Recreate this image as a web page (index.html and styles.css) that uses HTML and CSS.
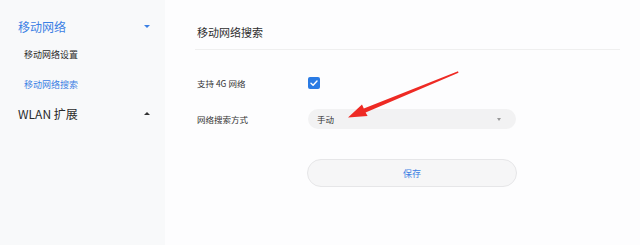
FILE: index.html
```html
<!DOCTYPE html>
<html lang="zh-CN">
<head>
    <meta charset="UTF-8">
    <meta name="viewport" content="width=device-width, initial-scale=1.0">
    <title>移动网络搜索</title>
    <link rel="stylesheet" href="styles.css">
</head>
<body>
    <div class="menu">
        <div class="grupo aberto">
            <span>移动网络</span>
            <i class="seta baixo"></i>
        </div>
        <div class="item">移动网络设置</div>
        <div class="item ativo">移动网络搜索</div>
        <div class="grupo">
            <span>WLAN 扩展</span>
            <i class="seta cima"></i>
        </div>
    </div>

    <div class="conteudo">
        <div class="titulo">移动网络搜索</div>
        <div class="linha">
            <label>支持 4G 网络</label>
            <span class="check">
                <svg width="12" height="12" viewBox="0 0 12 12"><path d="M3 6.2 L5.1 8.2 L9 4" fill="none" stroke="#fff" stroke-width="1.4" stroke-linecap="round" stroke-linejoin="round"/></svg>
            </span>
        </div>
        <div class="linha">
            <label>网络搜索方式</label>
            <div class="select">
                <span>手动</span>
                <i class="caret"></i>
            </div>
        </div>
        <button class="salvar">保存</button>

        <svg class="flecha" width="640" height="245" viewBox="0 0 640 245">
            <polygon points="348,117.5 362,104.6 363.8,108.4 458,71.2 458.5,72.7 365.6,112.4 367.6,116" fill="#ee2a24"/>
        </svg>
    </div>
</body>
</html>
```

FILE: styles.css
```css
body {
    margin: 0;
    display: flex;
    height: 245px;
    font-family: "Noto Sans CJK SC", "Noto Sans", sans-serif;
    background-color: #fdfdfe;
    color: #333;
    overflow: hidden;
}
.menu {
    width: 165px;
    background-color: #f8f9fa;
    padding-top: 13px;
    box-sizing: border-box;
}
.grupo {
    display: flex;
    align-items: center;
    justify-content: space-between;
    height: 27px;
    padding: 0 15px 0 18px;
    font-size: 12px;
    color: #2b2b2b;
}
.grupo.aberto {
    color: #3b80e4;
}
.item {
    height: 30px;
    line-height: 30px;
    padding-left: 24px;
    font-size: 9px;
    color: #2b2b2b;
}
.item.ativo {
    color: #3b80e4;
}
.seta {
    width: 0;
    height: 0;
    border-left: 3px solid transparent;
    border-right: 3px solid transparent;
}
.seta.baixo {
    border-top: 3px solid #3b80e4;
}
.seta.cima {
    border-bottom: 3px solid #333;
}
.conteudo {
    flex: 1;
    padding: 0 20px 0 30px;
    position: relative;
}
.titulo {
    padding: 24px 0 9px 2px;
    line-height: 16px;
    font-size: 11px;
    color: #2e2e2e;
    border-bottom: 1px solid #efefef;
}
.linha {
    display: flex;
    align-items: center;
    height: 20px;
    margin-top: 16px;
    padding-left: 2px;
}
.titulo + .linha {
    margin-top: 23px;
}
.linha label {
    width: 111px;
    font-size: 8.5px;
    color: #333;
}
.check {
    width: 12px;
    height: 12px;
    border-radius: 2px;
    background-color: #2a7be4;
    display: flex;
    margin-top: -1px;
}
.select {
    width: 208px;
    height: 20px;
    border-radius: 10px;
    background-color: #f2f2f3;
    display: flex;
    align-items: center;
    justify-content: space-between;
    padding: 0 15px 0 9px;
    box-sizing: border-box;
    font-size: 8.5px;
    color: #333;
}
.caret {
    width: 0;
    height: 0;
    border-left: 2.5px solid transparent;
    border-right: 2.5px solid transparent;
    border-top: 3px solid #999;
}
.salvar {
    display: block;
    width: 210px;
    height: 28px;
    margin: 30px 0 0 112px;
    border: 1px solid #e6e6e8;
    border-radius: 14px;
    background-color: #f6f6f7;
    color: #3b80e4;
    font-family: inherit;
    font-size: 9px;
    cursor: pointer;
}
.flecha {
    position: absolute;
    left: -165px;
    top: 0;
    pointer-events: none;
}
```
